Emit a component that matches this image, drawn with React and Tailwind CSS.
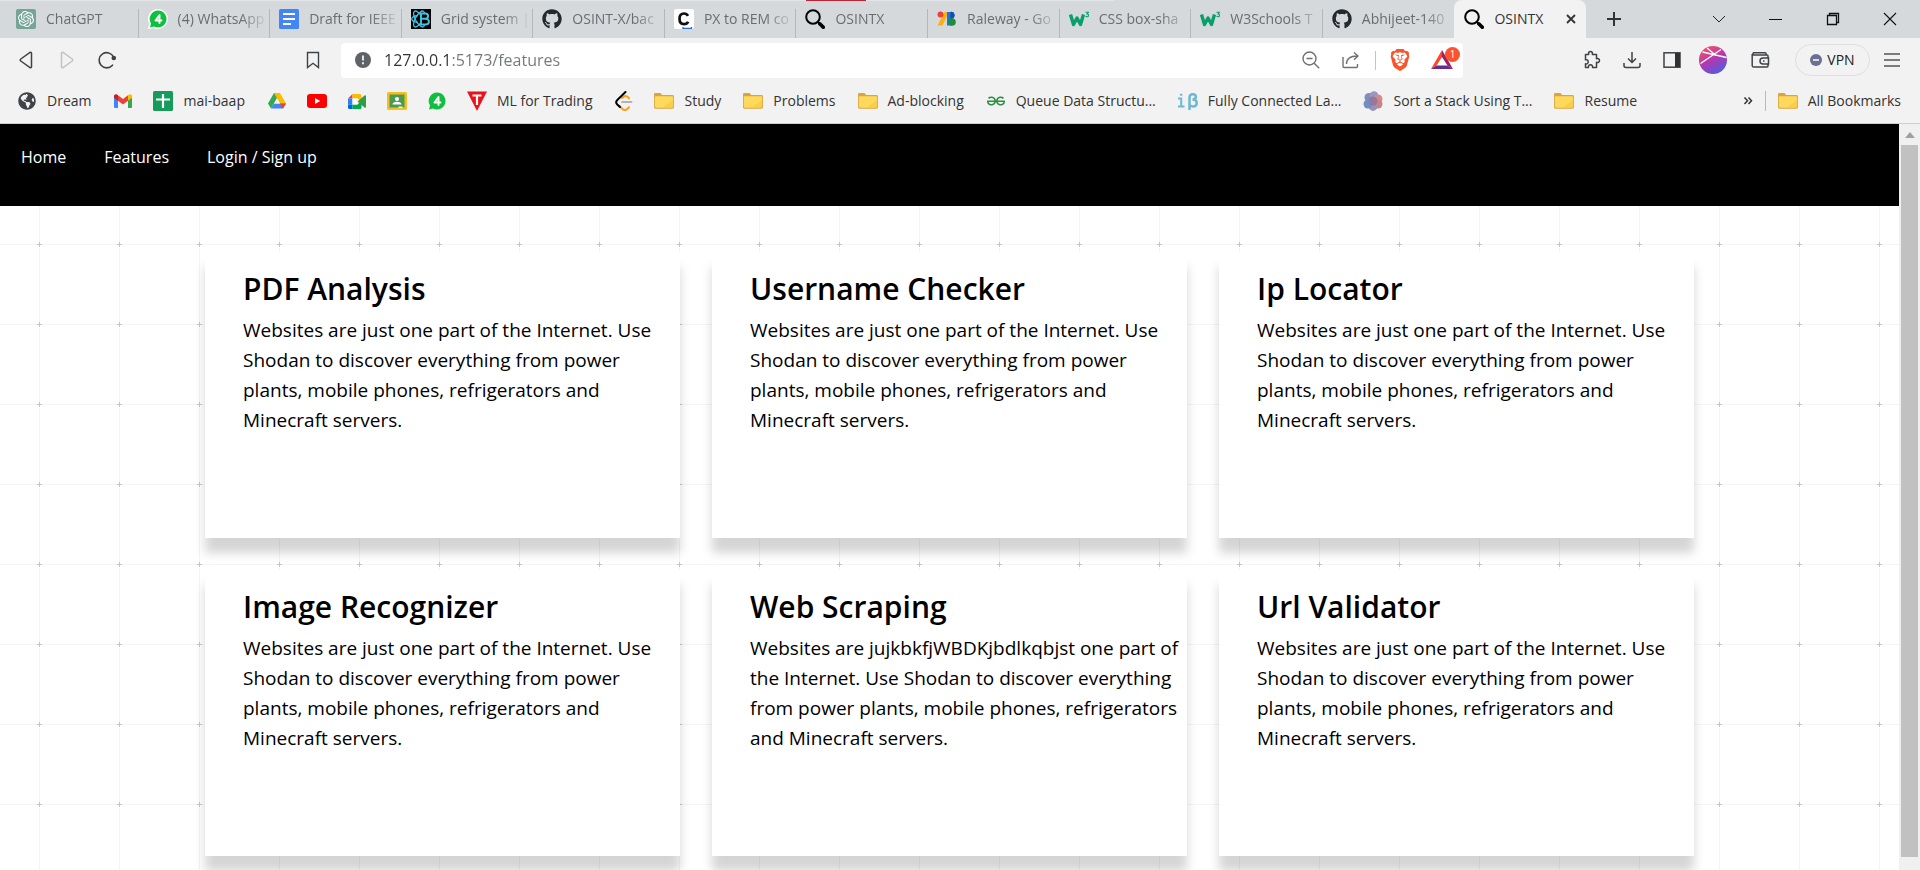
import React from 'react';
import { FaGithub, FaGlobeAmericas } from 'react-icons/fa';
import { SiOpenai, SiGeeksforgeeks, SiBrave } from 'react-icons/si';

/* ---------- site icons ---------- */

const Svg = ({ children, box = '0 0 20 20', className = 'size-5' }) => (
  <svg viewBox={box} className={`${className} shrink-0`} fill="none" aria-hidden="true">
    {children}
  </svg>
);

const ChatGptIcon = () => (
  <span className="flex size-5 shrink-0 items-center justify-center rounded-xs bg-[#74a597] text-white">
    <SiOpenai className="size-4" />
  </span>
);

const WhatsAppIcon = ({ halo }) => (
  <Svg>
    {halo && <path d="M10 0a10 10 0 1 1-4.6 18.9L0 20l1.2-5.200A10 10 0 0 1 10 0z" fill="#fff" />}
    <path d="M10 1.500a8.500 8.500 0 1 1-4 16L2 18.500l1-4A8.500 8.500 0 0 1 10 1.500z" fill="#0fbf3f" />
    <path d="M11.500 14V6L7.500 11.500h6" stroke="#fff" strokeWidth="1.900" strokeLinejoin="round" strokeLinecap="round" />
  </Svg>
);

const DocsIcon = () => (
  <Svg>
    <rect width="20" height="20" rx="1.500" fill="#4285f4" />
    <path d="M4 5h12M4 10h12M4 15h8" stroke="#fff" strokeWidth="2.200" />
  </Svg>
);

const ReactBootstrapIcon = () => (
  <Svg>
    <rect width="20" height="20" fill="#000" />
    <g stroke="#41c5e3" strokeWidth="1.300">
      <ellipse cx="8" cy="10" rx="3.500" ry="9" transform="rotate(30 8 10)" />
      <ellipse cx="8" cy="10" rx="3.500" ry="9" transform="rotate(-30 8 10)" />
      <path d="M7 6.500C3 7 .8 8.500.8 10s2.200 3 6.200 3.500" />
    </g>
    <path d="M10 4.500h4.500a2.600 2.600 0 0 1 0 5.200H10zM10 9.700h5a2.900 2.900 0 0 1 0 5.800h-5z" fill="#000" stroke="#41c5e3" strokeWidth="1.900" />
  </Svg>
);

const PxToRemIcon = () => (
  <Svg>
    <rect width="20" height="20" rx="2" fill="#fff" />
    <path d="M14 6.800C13.200 5.300 11.900 4.500 10 4.500c-2.800 0-4.500 2-4.500 5.300s1.700 5.400 4.500 5.400c2 0 3.300-.8 4.100-2.500" stroke="#111" strokeWidth="2.700" />
    <path d="M9 18v1.300h8.500V18" stroke="#1f6fe0" strokeWidth="1.300" />
  </Svg>
);

const MagnifierIcon = () => (
  <Svg>
    <circle cx="8" cy="8" r="6.800" stroke="#000" strokeWidth="2" />
    <path d="m12.700 12.700 2 2" stroke="#000" strokeWidth="2" />
    <path d="m14.800 14.800 3.500 3.500" stroke="#000" strokeWidth="3.600" strokeLinecap="round" />
  </Svg>
);

const FontsIcon = () => (
  <Svg>
    <path d="M7.500 3H12L5.500 16.500H.5z" fill="#fbaf13" />
    <circle cx="3.500" cy="5.500" r="3" fill="#ea4335" />
    <path d="M10 3h5v13.500h-5z" fill="#1a73e8" />
    <path d="M14 3a3.300 3.300 0 0 1 0 6.600z" fill="#174ea6" stroke="#174ea6" />
    <circle cx="15" cy="13" r="3.800" fill="#1e8e3e" />
  </Svg>
);

const W3Icon = () => (
  <Svg>
    <path d="m1.500 5.500 3 10 3.500-6.500 3.500 6.500 3-10" stroke="#0a9e6b" strokeWidth="3.400" strokeLinejoin="round" />
    <path d="M16.500 3.300h3l-1.500 1.700c2 0 2 2.700.2 2.700-.9 0-1.400-.3-1.700-.7" stroke="#0a9e6b" strokeWidth="1.100" />
  </Svg>
);

const GitHubIcon = () => <FaGithub className="size-5 shrink-0 text-[#24292e]" />;

const GlobeIcon = () => <FaGlobeAmericas className="size-[18px] w-5 shrink-0 text-[#3f4246]" />;

const GmailIcon = () => (
  <Svg>
    <path d="M1 4.500V16a1 1 0 0 0 1 1h3V8z" fill="#4285f4" />
    <path d="M19 4.500V16a1 1 0 0 1-1 1h-3V8z" fill="#34a853" />
    <path d="M5 4.300v5.400l5 3.800 5-3.800V4.300L10 8z" fill="#ea4335" />
    <path d="M1 5v1.700l4 3V4.300l-.8-.6C2.900 2.700 1 3.500 1 5z" fill="#c5221f" />
    <path d="M19 5v1.700l-4 3V4.300l.8-.6C17.100 2.700 19 3.500 19 5z" fill="#fbbc04" />
  </Svg>
);

const SheetsIcon = () => (
  <Svg>
    <rect width="20" height="20" rx="1.500" fill="#169c5a" />
    <path d="M10 3v14M3 8.500h14" stroke="#fff" strokeWidth="2.200" />
  </Svg>
);

const DriveIcon = () => (
  <Svg>
    <path d="M7 2h6l-6.200 10.700L4 17.600 1 12.400z" fill="#34a853" />
    <path d="M7 2h6l6 10.400h-6z" fill="#fbbc04" />
    <path d="m4 17.600 3-5.200h12l-3 5.200z" fill="#4285f4" />
    <path d="M13 12.400h6l-3 5.200z" fill="#ea4335" />
    <path d="M10 7.200 7 12.400h6z" fill="#f2f2f2" />
  </Svg>
);

const YouTubeIcon = () => (
  <Svg>
    <rect y="3" width="20" height="14" rx="3" fill="#f00" />
    <path d="m8 7 5.200 3L8 13z" fill="#fff" />
  </Svg>
);

const MeetIcon = () => (
  <Svg>
    <path d="M1 7.500 5.500 3v4.500z" fill="#ea4335" />
    <path d="M1 7.500h4.500v6H1z" fill="#2684fc" />
    <path d="M1 13.500h4.500V18H2.500A1.500 1.500 0 0 1 1 16.500z" fill="#0066da" />
    <path d="M5.500 3H13a1.500 1.500 0 0 1 1.500 1.500V10L10.500 7.500h-5z" fill="#ffba00" />
    <path d="M5.500 13.500h5l4-3.500v6.500A1.500 1.500 0 0 1 13 18H5.500z" fill="#00ac47" />
    <path d="M10.500 10.500 17.500 4.500c.6-.5 1.500-.1 1.500.6v10.800c0 .7-.9 1.100-1.500.6z" fill="#2f9e44" />
    <path d="M5.500 7.500h5v6h-5z" fill="#fff" />
  </Svg>
);

const ClassroomIcon = () => (
  <Svg>
    <rect y="1" width="20" height="18" rx="1.500" fill="#f4c020" />
    <rect x="2.500" y="3.500" width="15" height="13" fill="#4a9a50" />
    <circle cx="10" cy="8" r="2" fill="#fff" />
    <path d="M5.500 13.500c0-2 2-2.800 4.500-2.800s4.500.8 4.500 2.800z" fill="#fff" />
    <path d="M11.500 15.500h4v1.500h-4z" fill="#e8f5e9" />
  </Svg>
);

const TradingIcon = () => (
  <Svg>
    <path d="M0 .5h20L10 20z" fill="#e8131b" />
    <path d="M5.500 4.500h9M10 4.500v9.500" stroke="#fff" strokeWidth="2.200" />
  </Svg>
);

const LeetCodeIcon = () => (
  <Svg>
    <path d="M8 11h9.500" stroke="#b3b3b3" strokeWidth="1.900" strokeLinecap="round" />
    <path d="m8 7 1.500-1.200c1.200-1 2.800-1 4 0l1.500 1.500M5.500 15l3 3c1.400 1.300 3.400 1.300 4.800 0l1.700-1.700" stroke="#ffa116" strokeWidth="2" strokeLinecap="round" />
    <path d="M11.500 1 3.300 9c-1.300 1.300-1.300 3.200 0 4.500L6 16" stroke="#000" strokeWidth="2" strokeLinecap="round" />
  </Svg>
);

const FolderIcon = () => (
  <Svg>
    <path d="M0 3.500C0 2.700.5 2 1.300 2h5.200l1.700 2H18.500c.8 0 1.500.6 1.500 1.400V16c0 1-.6 1.700-1.500 1.700h-17C.6 17.700 0 17 0 16z" fill="#d9a441" />
    <path d="M.8 6.500c0-.7.5-1.200 1.200-1.200h16c.7 0 1.200.5 1.200 1.200v8.800c0 .8-.5 1.400-1.200 1.400H2c-.7 0-1.200-.6-1.200-1.400z" fill="#ffd95c" />
    <path d="M19.200 9v6.300c0 .8-.5 1.400-1.200 1.400H8z" fill="#f8c63c" opacity=".6" />
  </Svg>
);

const GfgIcon = () => <SiGeeksforgeeks className="size-[18px] w-5 shrink-0 text-[#2f8d46]" />;

const BetaIcon = () => (
  <Svg>
    <path d="M0 7.500h3.200V15M0 15.500h6.500M2 3.800h2.300" stroke="#6cb9d0" strokeWidth="2" />
    <path d="M11.500 19V6.500c0-2.500 1.300-3.300 3.200-3.300 2 0 3.200.9 3.200 2.600s-1.300 2.700-3.400 2.700c2.700 0 4.200 1.200 4.200 3.400 0 2.300-1.500 3.500-3.700 3.500-1.600 0-2.800-.5-3.500-1.500" stroke="#6cb9d0" strokeWidth="2.500" />
  </Svg>
);

const StackIcon = () => (
  <Svg>
    <g opacity=".85">
      <circle cx="6" cy="6.500" r="4.500" fill="#6f7cb4" />
      <circle cx="11" cy="4.500" r="4.300" fill="#8a86b8" />
      <circle cx="15" cy="8" r="4.500" fill="#cb7a80" />
      <circle cx="15" cy="13" r="4.500" fill="#c4706c" />
      <circle cx="10" cy="15.500" r="4.400" fill="#8e7fae" />
      <circle cx="5" cy="13" r="4.500" fill="#5580bd" />
      <circle cx="10" cy="10" r="4.500" fill="#86628f" />
    </g>
  </Svg>
);

/* ---------- browser data ---------- */

const tabs = [
  { label: 'ChatGPT', icon: <ChatGptIcon /> },
  { label: '(4) WhatsApp', icon: <WhatsAppIcon halo /> },
  { label: 'Draft for IEEE', icon: <DocsIcon /> },
  { label: 'Grid system |', icon: <ReactBootstrapIcon /> },
  { label: 'OSINT-X/bac', icon: <GitHubIcon /> },
  { label: 'PX to REM co', icon: <PxToRemIcon /> },
  { label: 'OSINTX', icon: <MagnifierIcon /> },
  { label: 'Raleway - Go', icon: <FontsIcon /> },
  { label: 'CSS box-sha', icon: <W3Icon /> },
  { label: 'W3Schools T', icon: <W3Icon /> },
  { label: 'Abhijeet-140', icon: <GitHubIcon /> },
];

const bookmarks = [
  { label: 'Dream', icon: <GlobeIcon /> },
  { name: 'Gmail', icon: <GmailIcon /> },
  { label: 'mai-baap', icon: <SheetsIcon /> },
  { name: 'Drive', icon: <DriveIcon /> },
  { name: 'YouTube', icon: <YouTubeIcon /> },
  { name: 'Meet', icon: <MeetIcon /> },
  { name: 'Classroom', icon: <ClassroomIcon /> },
  { name: 'WhatsApp', icon: <WhatsAppIcon /> },
  { label: 'ML for Trading', icon: <TradingIcon /> },
  { name: 'LeetCode', icon: <LeetCodeIcon /> },
  { label: 'Study', icon: <FolderIcon /> },
  { label: 'Problems', icon: <FolderIcon /> },
  { label: 'Ad-blocking', icon: <FolderIcon /> },
  { label: 'Queue Data Structu...', icon: <GfgIcon /> },
  { label: 'Fully Connected La...', icon: <BetaIcon /> },
  { label: 'Sort a Stack Using T...', icon: <StackIcon /> },
  { label: 'Resume', icon: <FolderIcon /> },
];

/* ---------- browser chrome ---------- */

function TabStrip() {
  return (
    <div className="relative flex h-[38px] bg-[#d5d9dc] pl-[7px]">
      <span className="absolute top-0 left-0 h-px w-[58%] bg-[#e2e5e7]" />
      <span className="absolute top-0 left-[42%] h-px w-[60px] bg-[#c02335]" />
      <div role="tablist" className="grid min-w-0 flex-1 grid-cols-12">
        {tabs.map((t, i) => (
          <button
            key={i}
            role="tab"
            aria-selected="false"
            className="flex min-w-0 items-end text-left text-sm text-[#6a6d70]"
          >
            <span className={`flex h-[29px] w-full min-w-0 items-start gap-[10px] pl-[9px] ${i < tabs.length - 1 ? 'border-r border-[#b4b8bc]' : ''}`}>
              {t.icon}
              <span className="min-w-0 flex-1 overflow-hidden leading-5 whitespace-nowrap [mask-image:linear-gradient(to_right,black_68%,transparent)]">
                {t.label}
              </span>
            </span>
          </button>
        ))}
        <div className="flex min-w-0 items-center gap-[10px] rounded-t-lg bg-[#f2f2f2] pr-[5px] pl-[10px]">
          <MagnifierIcon />
          <button role="tab" aria-selected="true" className="flex-1 text-left text-sm text-[#333]">
            OSINTX
          </button>
          <button aria-label="Close tab" className="p-1">
            <Svg box="0 0 12 12" className="size-3">
              <path d="m2 2 8 8M10 2l-8 8" stroke="#333" strokeWidth="1.800" />
            </Svg>
          </button>
        </div>
      </div>
      <div className="flex w-[334px] items-center pr-0.5">
        <button aria-label="New tab" className="flex w-[55px] justify-center">
          <Svg box="0 0 16 16" className="size-4">
            <path d="M8 1v14M1 8h14" stroke="#333" strokeWidth="2" />
          </Svg>
        </button>
        <span className="flex-1" />
        <button aria-label="Search tabs" className="flex w-[57px] justify-center">
          <Svg box="0 0 14 14" className="size-[14px]">
            <path d="m1 4 6 6 6-6" stroke="#222" />
          </Svg>
        </button>
        <button aria-label="Minimize" className="flex w-[57px] justify-center">
          <Svg box="0 0 13 13" className="size-[13px]">
            <path d="M0 6.500h13" stroke="#111" />
          </Svg>
        </button>
        <button aria-label="Restore" className="flex w-[57px] justify-center">
          <Svg box="0 0 14 14" className="size-[14px]">
            <path d="M1.500 3.500h9v9h-9zM3.500 3.500v-2h9v9h-2" stroke="#111" strokeWidth="1.300" />
          </Svg>
        </button>
        <button aria-label="Close" className="flex w-[57px] justify-center">
          <Svg box="0 0 14 14" className="size-[14px]">
            <path d="m1 1 12 12M13 1 1 13" stroke="#111" strokeWidth="1.100" />
          </Svg>
        </button>
      </div>
    </div>
  );
}

function Toolbar() {
  return (
    <div className="flex h-11 items-center text-[#3f4246]">
      <div className="flex w-[341px] items-center pr-[18px] pl-[17px]">
        <div className="flex flex-1 gap-5">
          <button aria-label="Back">
            <Svg>
              <path d="M14.500 3.200v13.600c0 .9-.8 1.200-1.500.8L3.800 11c-.8-.5-.8-1.400 0-2L13 2.400c.7-.4 1.500-.1 1.500.8z" stroke="#3f4246" strokeWidth="1.500" />
            </Svg>
          </button>
          <button aria-label="Forward">
            <Svg>
              <path d="M4.500 3.200v13.600c0 .9.800 1.200 1.500.8l9.200-6.600c.8-.5.8-1.400 0-2L6 2.400c-.7-.4-1.500-.1-1.500.8z" stroke="#c2c2c2" strokeWidth="1.500" />
            </Svg>
          </button>
          <button aria-label="Reload">
            <Svg>
              <path d="M15.500 15.200A7.600 7.600 0 1 1 16.600 7" stroke="#3f4246" strokeWidth="1.600" strokeLinecap="round" />
              <circle cx="16.800" cy="8" r="2.300" fill="#3f4246" />
            </Svg>
          </button>
        </div>
        <button aria-label="Bookmark this page">
          <Svg>
            <path d="M4.500 2.500h11v15L10 13.300l-5.500 4.200z" stroke="#3f4246" strokeWidth="1.400" />
          </Svg>
        </button>
      </div>

      <div className="flex h-[35px] min-w-0 flex-1 items-center rounded bg-white pr-[10px] pl-[14px]">
        <Svg box="0 0 16 16" className="size-4">
          <circle cx="8" cy="8" r="8" fill="#5f6368" />
          <path d="M8 3.500v5M8 10.300v1.900" stroke="#fff" strokeWidth="1.700" />
        </Svg>
        <input
          aria-label="Address"
          defaultValue="127.0.0.1:5173/features"
          className="ml-[13px] min-w-0 flex-1 bg-[linear-gradient(90deg,#333_68px,#74777a_68px)] bg-clip-text text-base text-transparent outline-none"
        />
        <div className="flex items-center gap-5">
          <button aria-label="Zoom">
            <Svg>
              <circle cx="8.500" cy="8.500" r="6.500" stroke="#6d7175" strokeWidth="1.400" />
              <path d="m13.200 13.200 5 5M5.500 8.500h6" stroke="#6d7175" strokeWidth="1.400" />
            </Svg>
          </button>
          <button aria-label="Share">
            <Svg>
              <path d="M2 7v9.500c0 .8.400 1 1 1h12.500c.7 0 1-.4 1-1V14M5.500 14c0-5 3.500-8 11-8M13 2.500 17 6l-4 3.800" stroke="#6d7175" strokeWidth="1.400" />
            </Svg>
          </button>
        </div>
        <span className="ml-[14px] h-[19px] w-px bg-[#c4c4c4]" />
        <button aria-label="Brave Shields" className="ml-[13px] text-[#fb542b]">
          <SiBrave className="size-[22px]" />
        </button>
        <button aria-label="Rewards" className="relative ml-5">
          <Svg box="0 0 22 22" className="size-[22px]">
            <path d="M11 1 0 20l5.500-3.500L11 8z" fill="#ff4724" />
            <path d="m11 1 11 19-5.500-3.500L11 8z" fill="#9e1f63" />
            <path d="M0 20h22l-5.500-3.500h-11z" fill="#662d91" />
          </Svg>
          <span className="absolute -top-0.5 left-[14px] flex size-[15px] items-center justify-center rounded-full bg-[#fb542b] text-[10px] text-white">
            1
          </span>
        </button>
      </div>

      <div className="flex w-[457px] items-center justify-end pr-[18px]">
        <div className="flex items-center gap-5">
          <button aria-label="Extensions">
            <Svg>
              <path d="M3.500 4.500h3.200c-.6-2 .5-3 1.800-3s2.400 1 1.800 3h4.200v4.200c2-.6 3 .5 3 1.800s-1 2.400-3 1.800v5.200h-4c.4-1.800-.6-2.700-2-2.700s-2.400.9-2 2.700h-3v-3.700c1.800.4 2.700-.6 2.700-2s-.9-2.400-2.700-2z" stroke="#3f4246" strokeWidth="1.500" strokeLinejoin="round" />
            </Svg>
          </button>
          <button aria-label="Downloads">
            <Svg>
              <path d="M10 2v10M6 8.500l4 4 4-4M2 13v2.500c0 1.300.7 2 2 2h12c1.300 0 2-.7 2-2V13" stroke="#3f4246" strokeWidth="1.500" />
            </Svg>
          </button>
          <button aria-label="Sidebar">
            <Svg>
              <rect x="2" y="2.800" width="16" height="14.400" stroke="#3f4246" strokeWidth="1.500" />
              <path d="M13 3h5v14h-5z" fill="#2f3134" />
            </Svg>
          </button>
        </div>
        <button aria-label="Profile" className="ml-[17px]">
          <Svg box="0 0 28 28" className="size-7">
            <defs>
              <linearGradient id="avatar" x1="6" y1="1" x2="20" y2="28" gradientUnits="userSpaceOnUse">
                <stop stopColor="#f0506a" />
                <stop offset=".5" stopColor="#b138b4" />
                <stop offset="1" stopColor="#4b5fe0" />
              </linearGradient>
            </defs>
            <circle cx="14" cy="14" r="14" fill="url(#avatar)" />
            <path d="M1.500 17.500 22 3.500M3.500 6l24 5.500M8 2l9 7.500" stroke="#fff" strokeWidth="1.300" />
          </Svg>
        </button>
        <button aria-label="Wallet" className="ml-[23px]">
          <Svg>
            <path d="M18 8V6c0-.7-.4-1-1-1H3.500A1.300 1.300 0 0 1 3.500 2.800H15c.7 0 1 .3 1 1V5M2.200 4v11.500c0 1 .6 1.600 1.600 1.600H17c.7 0 1-.4 1-1V14M18.500 8H13a3 3 0 0 0 0 6h5.500zM13 11h1.500" stroke="#3f4246" strokeWidth="1.500" />
          </Svg>
        </button>
        <button className="ml-[25px] flex h-8 w-[75px] items-center justify-center gap-[5px] rounded-full border border-[#dedede] text-sm text-[#222]">
          <Svg box="0 0 12 12" className="size-3">
            <circle cx="6" cy="6" r="6" fill="#6b6f91" />
            <path d="M3 6h6" stroke="#fff" strokeWidth="1.500" />
          </Svg>
          VPN
        </button>
        <button aria-label="Menu" className="ml-3">
          <Svg>
            <path d="M2 4h16M2 10h16M2 16h16" stroke="#555" strokeWidth="1.500" />
          </Svg>
        </button>
      </div>
    </div>
  );
}

function BookmarksBar() {
  return (
    <nav aria-label="Bookmarks" className="flex h-[42px] items-center border-b border-[#cfcfcf] pr-[19px] pb-[3px] pl-[17px] text-sm text-[#333]">
      <ul className="flex min-w-0 flex-1 items-center gap-5 overflow-hidden">
        {bookmarks.map((b, i) => (
          <li key={i} className="shrink-0">
            <a href="#" aria-label={b.label ? undefined : b.name} className="flex items-center gap-[10px]">
              {b.icon}
              {b.label && <span className="pr-[2px] whitespace-nowrap">{b.label}</span>}
            </a>
          </li>
        ))}
      </ul>
      <button aria-label="More bookmarks">
        <Svg box="0 0 10 10" className="size-[10px]">
          <path d="m1.500 1.500 3 3.300-3 3.300M5.500 1.500l3 3.300-3 3.300" stroke="#333" strokeWidth="1.500" />
        </Svg>
      </button>
      <span className="mx-3 h-5 w-px bg-[#b9b9b9]" />
      <a href="#" className="flex items-center gap-[10px]">
        <FolderIcon />
        All Bookmarks
      </a>
    </nav>
  );
}

/* ---------- features page ---------- */

const blurb =
  'Websites are just one part of the Internet. Use Shodan to discover everything from power plants, mobile phones, refrigerators and Minecraft servers.';

const features = [
  { title: 'PDF Analysis', text: blurb },
  { title: 'Username Checker', text: blurb },
  { title: 'Ip Locator', text: blurb },
  { title: 'Image Recognizer', text: blurb },
  {
    title: 'Web Scraping',
    text: 'Websites are jujkbkfjWBDKjbdlkqbjst one part of the Internet. Use Shodan to discover everything from power plants, mobile phones, refrigerators and Minecraft servers.',
  },
  { title: 'Url Validator', text: blurb },
];

function GridBackdrop() {
  return (
    <svg className="absolute inset-0 size-full" aria-hidden="true">
      <defs>
        <pattern id="grid" width="80" height="80" patternUnits="userSpaceOnUse" shapeRendering="crispEdges">
          <path d="M39 0h1v80h-1zM0 38h80v1H0z" fill="#f4f4f4" />
          <path d="M39 36h1v5h-1zM37 38h5v1h-5z" fill="#c6c6c6" />
        </pattern>
      </defs>
      <rect width="100%" height="100%" fill="url(#grid)" />
    </svg>
  );
}

function Page() {
  return (
    <div className="flex min-w-0 flex-1 flex-col overflow-hidden bg-white">
      <nav className="flex h-[82px] shrink-0 gap-[38px] bg-black pt-[21px] pl-[21px] text-base text-white">
        <a href="#" className="h-6">Home</a>
        <a href="#" className="h-6">Features</a>
        <a href="#" className="h-6">Login / Sign up</a>
      </nav>
      <main className="relative flex-1">
        <GridBackdrop />
        <div className="relative mx-auto grid max-w-[1489px] grid-cols-3 gap-8 pt-[46px]">
          {features.map((f) => (
            <section key={f.title} className="min-h-[286px] bg-white pt-[17px] pr-1 pl-[38px] text-black shadow-[0_15px_10px_rgba(0,0,0,0.17)]">
              <h2 className="text-[30px] leading-10 font-semibold">{f.title}</h2>
              <p className="mt-[6px] text-[19px] leading-[30px]">{f.text}</p>
            </section>
          ))}
        </div>
      </main>
    </div>
  );
}

function Scrollbar() {
  return (
    <div aria-hidden="true" className="flex w-[21px] flex-col items-center bg-[#f0f0f0] pb-[13px]">
      <span className="flex h-[21px] items-center">
        <Svg box="0 0 10 6" className="h-[6px] w-[10px]">
          <path d="M5 0 10 6H0z" fill="#a0a0a0" />
        </Svg>
      </span>
      <span className="w-[17px] flex-1 bg-[#c1c1c1]" />
    </div>
  );
}

export default function App() {
  return (
    <div className="flex h-screen flex-col overflow-hidden bg-[#f2f2f2] font-['Open_Sans','Noto_Sans',sans-serif]">
      <header className="shrink-0">
        <TabStrip />
        <Toolbar />
        <BookmarksBar />
      </header>
      <div className="flex min-h-0 flex-1">
        <Page />
        <Scrollbar />
      </div>
    </div>
  );
}
